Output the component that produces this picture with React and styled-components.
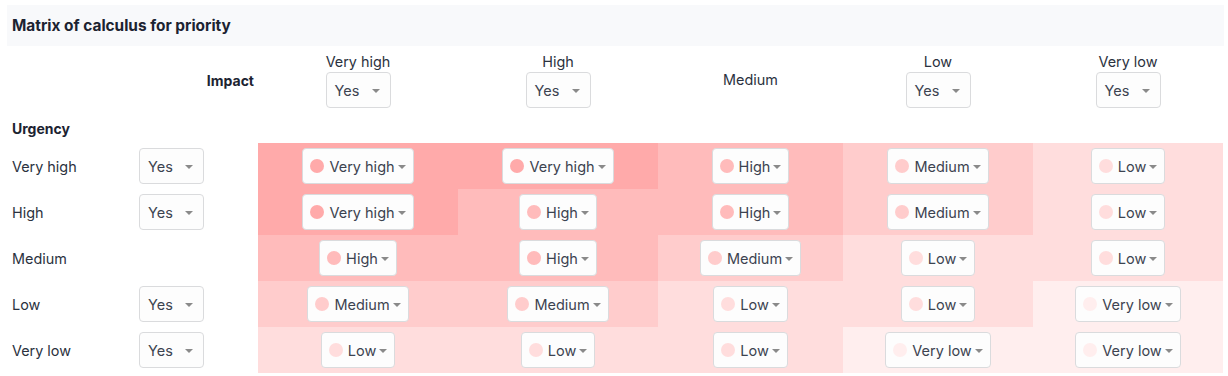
import React from "react";
import styled, { createGlobalStyle } from "styled-components";

const GlobalStyle = createGlobalStyle`
  html, body { margin: 0; padding: 0; background: #ffffff; }
  body { font-family: Inter, "Noto Sans", "Liberation Sans", sans-serif; color: #333a45; }
`;

const LEVEL_COLORS = {
  "Very high": "#ffaaaa",
  High: "#ffbbbb",
  Medium: "#ffcccc",
  Low: "#ffdddd",
  "Very low": "#ffeeee",
};

const LEVELS = ["Very high", "High", "Medium", "Low", "Very low"];
const IMPACT_SELECTS = [true, true, false, true, true];
const URGENCY_SELECTS = [true, true, false, true, true];

const MATRIX = [
  ["Very high", "Very high", "High", "Medium", "Low"],
  ["Very high", "High", "High", "Medium", "Low"],
  ["High", "High", "Medium", "Low", "Low"],
  ["Medium", "Medium", "Low", "Low", "Very low"],
  ["Low", "Low", "Low", "Very low", "Very low"],
];

const Page = styled.div`
  padding: 5px 4px 0 7px;
`;

const TitleBar = styled.div`
  background: #f8f9fb;
  height: 41px;
  display: flex;
  align-items: center;
  padding-left: 5px;
  font-weight: 700;
  font-size: 15.4px;
  color: #1c2331;
`;

const Grid = styled.div`
  display: grid;
  grid-template-columns: 127px 70px 54px 200px 200px 185px 190px 190px;
  grid-auto-rows: auto;
`;

const ImpactLabel = styled.div`
  grid-column: 1 / span 3;
  display: flex;
  align-items: center;
  justify-content: flex-end;
  padding-right: 4px;
  font-weight: 700;
  font-size: 14px;
  color: #1c2331;
`;

const HeaderCell = styled.div`
  height: 68px;
  padding: 6px 0;
  box-sizing: border-box;
  display: flex;
  flex-direction: column;
  align-items: center;
  justify-content: center;
  font-size: 14.4px;
`;

const HeaderText = styled.div`
  line-height: 20px;
  color: #2b3240;
`;

const UrgencyLabel = styled.div`
  grid-column: 1 / -1;
  height: 29px;
  display: flex;
  align-items: center;
  padding-left: 5px;
  padding-bottom: 1px;
  box-sizing: border-box;
  font-weight: 700;
  font-size: 14px;
  color: #1c2331;
`;

const RowLabel = styled.div`
  height: 46px;
  display: flex;
  align-items: center;
  padding-left: 5px;
  font-size: 14.4px;
  color: #2b3240;
`;

const SideCell = styled.div`
  height: 46px;
  display: flex;
  align-items: center;
  padding-left: 5px;
`;

const Spacer = styled.div``;

const MatrixCell = styled.div`
  height: 46px;
  display: flex;
  align-items: center;
  justify-content: center;
  background: ${(p) => p.$bg};
`;

const Dropdown = styled.div`
  box-sizing: border-box;
  height: 36px;
  display: inline-flex;
  align-items: center;
  background: #fdfdfd;
  border: 1px solid #dadbdd;
  border-radius: 4px;
  font-size: 14.5px;
  color: #3c4350;
  cursor: pointer;
  ${(p) =>
    p.$fixed
      ? `width: 65px; padding: 0 10px 0 8px; justify-content: space-between;`
      : `padding: 0 7px 0 7px;`}
`;

const Label = styled.span`
  margin: 0 3px 0 5px;
`;

const Caret = styled.span`
  width: 0;
  height: 0;
  border-left: 4px solid transparent;
  border-right: 4px solid transparent;
  border-top: 4px solid #8a8a8a;
  margin-top: 1px;
`;

const Dot = styled.span`
  width: 14px;
  height: 14px;
  border-radius: 50%;
  background: ${(p) => p.$color};
  flex-shrink: 0;
`;

function YesSelect() {
  return (
    <Dropdown $fixed>
      <span>Yes</span>
      <Caret />
    </Dropdown>
  );
}

function PrioritySelect({ level }) {
  return (
    <Dropdown>
      <Dot $color={LEVEL_COLORS[level]} />
      <Label>{level}</Label>
      <Caret />
    </Dropdown>
  );
}

export default function App() {
  return (
    <>
      <GlobalStyle />
      <Page>
        <TitleBar>Matrix of calculus for priority</TitleBar>
        <Grid>
          <ImpactLabel>Impact</ImpactLabel>
          {LEVELS.map((lvl, i) => (
            <HeaderCell key={lvl}>
              <HeaderText>{lvl}</HeaderText>
              {IMPACT_SELECTS[i] && <YesSelect />}
            </HeaderCell>
          ))}
          <UrgencyLabel>Urgency</UrgencyLabel>
          {LEVELS.map((lvl, r) => (
            <React.Fragment key={lvl}>
              <RowLabel>{lvl}</RowLabel>
              <SideCell>{URGENCY_SELECTS[r] && <YesSelect />}</SideCell>
              <Spacer />
              {MATRIX[r].map((val, c) => (
                <MatrixCell key={c} $bg={LEVEL_COLORS[val]}>
                  <PrioritySelect level={val} />
                </MatrixCell>
              ))}
            </React.Fragment>
          ))}
        </Grid>
      </Page>
    </>
  );
}
